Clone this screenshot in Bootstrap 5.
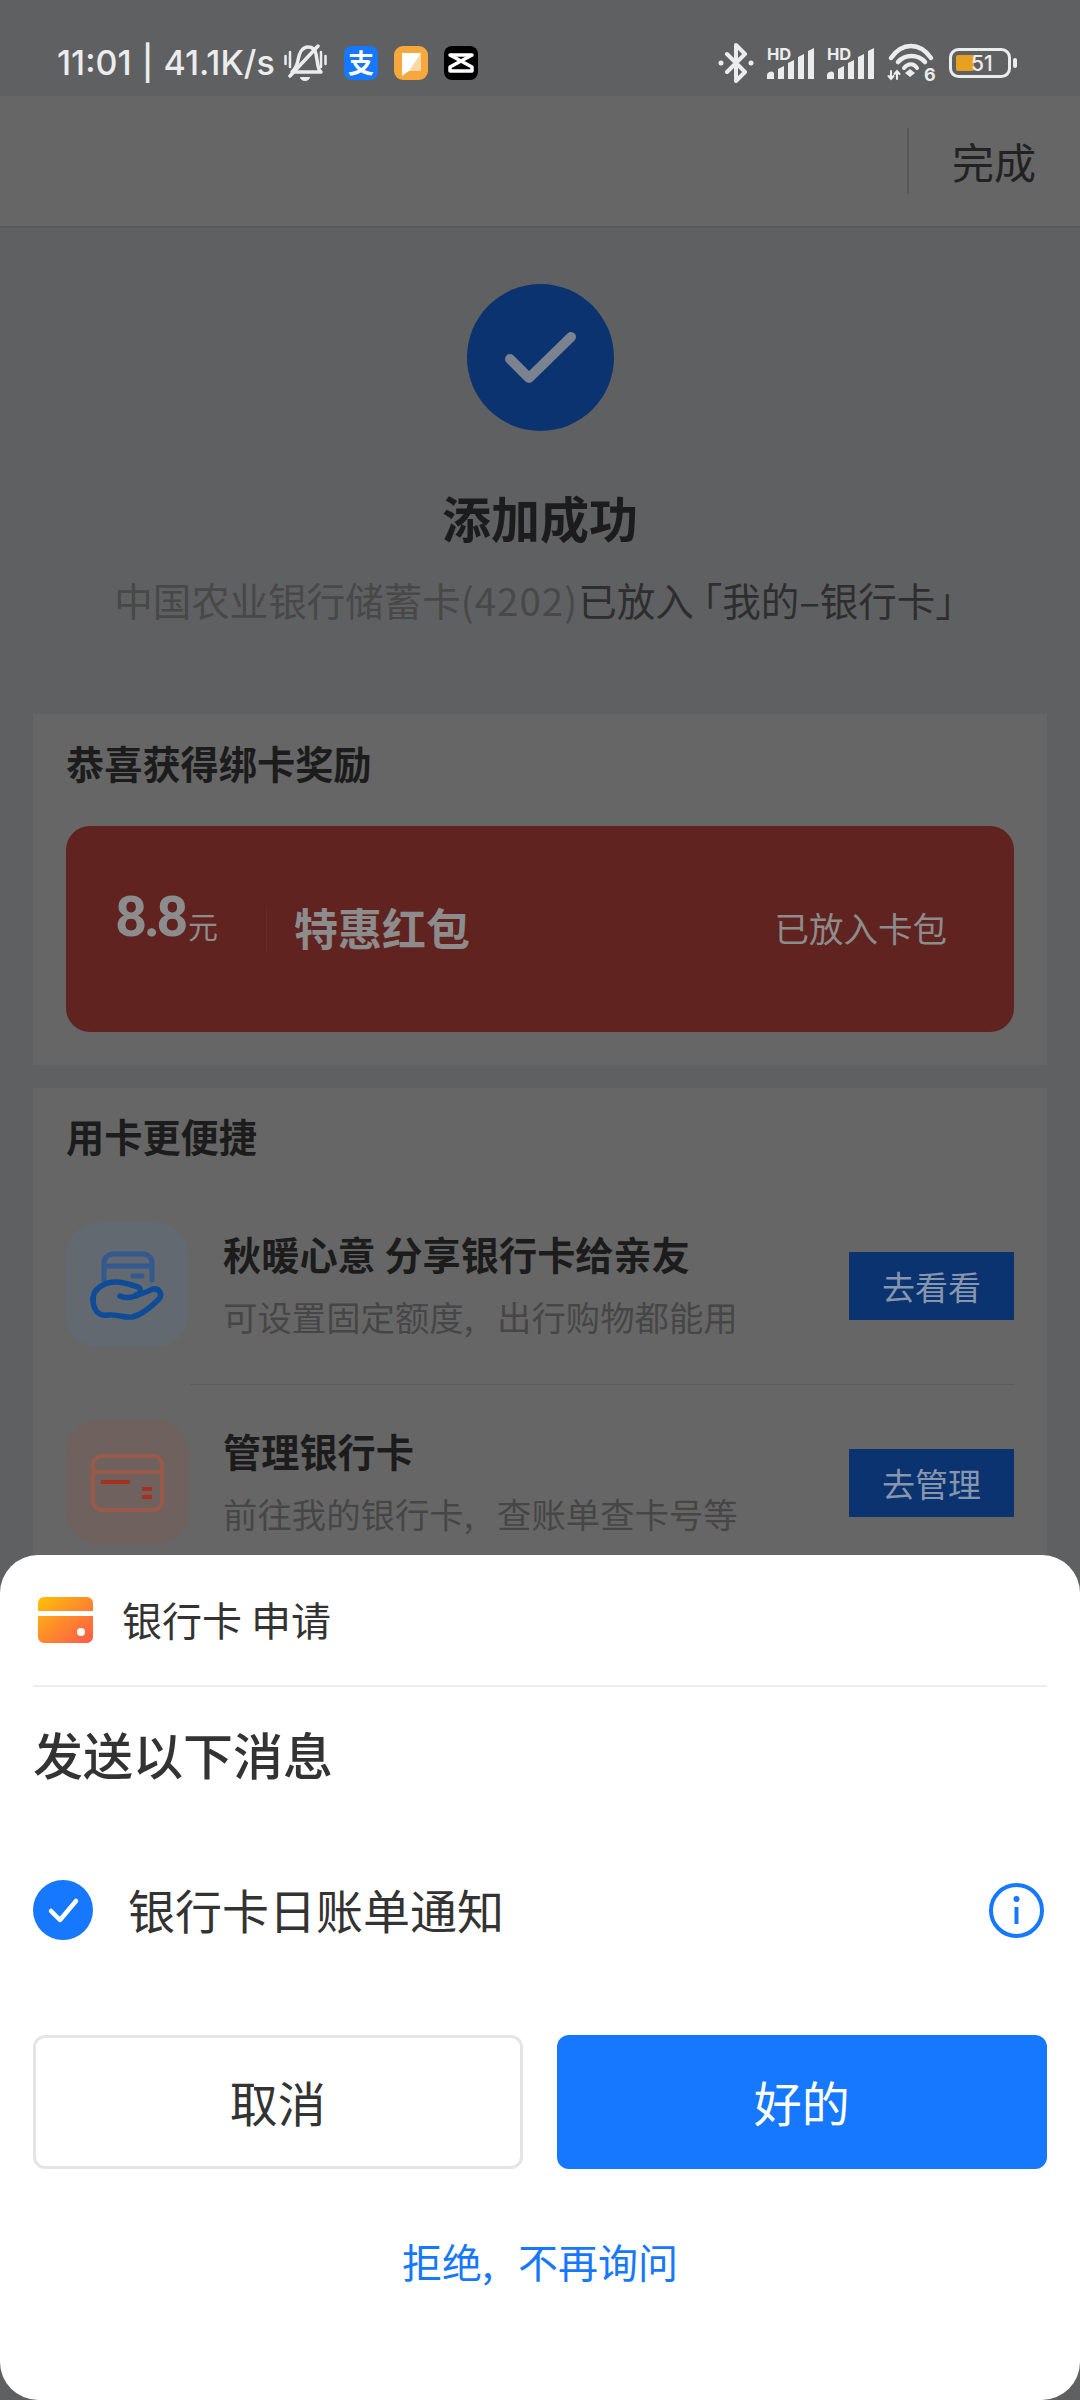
<!DOCTYPE html>
<html lang="zh-CN">
<head>
  <meta charset="utf-8" />
  <title>添加成功</title>
  <meta name="viewport" content="width=device-width, initial-scale=1" />
  <link href="https://cdn.jsdelivr.net/npm/bootstrap@5.3.0/dist/css/bootstrap.min.css" rel="stylesheet" />
  <style>
    html, body { margin: 0; height: 2400px; }
    body { width: 1080px; overflow: hidden; background: #5f6062; color: #1c1c1c; font-family: "Noto Sans CJK SC", "Noto Sans", sans-serif; }
    .phone { width: 1080px; height: 2400px; overflow: hidden; }

    .status-bar { height: 96px; padding: 30px 63px 0 57px; color: #ececec; }
    .status-time { width: 227px; flex-shrink: 0; font-family: Inter, sans-serif; font-size: 34px; font-weight: 500; word-spacing: 1px; line-height: 40px; white-space: nowrap; }
    .app-tile { width: 34px; height: 34px; border-radius: 8px; margin-right: 16px; }
    .tile-pay { background: #1677ff; color: #fff; font-size: 26px; font-weight: 700; line-height: 32px; text-align: center; }

    .top-nav { height: 132px; background: #666; border-bottom: 2px solid #585858; padding-right: 44px; }
    .nav-split { width: 2px; height: 66px; background: #595959; margin-right: 43px; }
    .nav-done { font-size: 42px; line-height: 56px; color: #222; }

    .ok-circle { width: 147px; height: 147px; margin-top: 56px; background: #0a3370; }
    .ok-title { margin: 56px 0 3px; font-size: 49px; font-weight: 700; line-height: 60px; color: #1c1c1c; }
    .ok-sub { margin-top: 24px; padding: 0 0 2px 8px; font-size: 38.5px; line-height: 50px; color: #484848; white-space: nowrap; }
    .ok-sub .sub-dark { color: #2e2e2e; }
    .ok-sub .card-tail { letter-spacing: 1px; }
    .ok-sub .close-up { letter-spacing: -10px; }

    .sec-box { margin: 0 33px; padding: 27px 33px 33px; background: #666; }
    .sec-title { margin: -3px 0 3px; font-size: 38.2px; font-weight: 700; line-height: 50px; color: #1c1c1c; }
    .red-banner { height: 206px; margin-top: 38px; padding: 0 67px 0 49px; border-radius: 24px; background: #612320; color: #8c8c8c; }
    .amount-num { font-family: Roboto, sans-serif; font-size: 56px; font-weight: 700; letter-spacing: -3.500px; line-height: 60px; margin-top: -24px; }
    .amount-unit { font-size: 30px; line-height: 40px; margin-top: -8px; margin-left: 3px; }
    .banner-split { width: 1px; height: 46px; margin: 0 27px 0 48px; background: #682a27; }
    .banner-name { font-size: 44px; font-weight: 700; line-height: 56px; margin-top: -5px; }
    .banner-state { font-size: 34.5px; line-height: 46px; margin-top: -5px; }

    .tool-row { height: 124px; }
    .tool-icon { width: 122px; height: 124px; border-radius: 32px; margin-right: 35px; }
    .tool-blue { background: #626971; }
    .tool-red { background: #6f615e; }
    .tool-main { padding-top: 6px; }
    .tool-name { font-size: 38.2px; font-weight: 700; line-height: 50px; color: #1c1c1c; white-space: nowrap; }
    .tool-desc { margin-top: 12px; font-size: 34.4px; word-spacing: 16px; line-height: 50px; color: #464646; white-space: nowrap; }
    .tool-btn { width: 165px; height: 68px; margin-top: 2px; padding: 0; border: 0; border-radius: 0; background: #0a3370; color: #8796ad; font-size: 33px; line-height: 64px; }
    .tool-btn:hover { background: #0a3370; color: #8796ad; }
    .tool-rule { height: 1px; margin: 37px 0 35px 124px; background: #5c5c5c; }

    .sheet { left: 0; right: 0; bottom: 0; height: 845px; padding: 0 33px; background: #fff; border-radius: 38px; }
    .sheet-head { height: 132px; border-bottom: 2px solid #eee; padding-left: 5px; }
    .sheet-from { margin-left: 29px; margin-top: -3px; font-size: 40px; line-height: 50px; color: #333; white-space: pre; }
    .sheet-title { margin: 36px 0 0; font-size: 50px; font-weight: 500; line-height: 60px; color: #333; }
    .msg-row { height: 60px; margin-top: 97px; }
    .msg-text { margin-left: 35px; margin-top: -3px; font-size: 47px; line-height: 60px; color: #333; }
    .sheet-btns { margin-top: 95px; gap: 34px; }
    .sheet-btn { width: 490px; height: 134px; padding: 0 0 3px; border-radius: 12px; font-size: 48px; line-height: 60px; }
    .btn-cancel { background: #fff; border: 3px solid #e5e5e5; color: #333; }
    .btn-ok { width: 491px; background: #1677ff; border: 0; color: #fff; }
    .never-link { display: block; margin-top: 67px; font-size: 40px; word-spacing: 16px; line-height: 50px; color: #1677ff; text-decoration: none; text-align: center; }
  </style>
</head>
<body>
  <div class="phone position-relative">

    <div class="status-bar d-flex align-items-center">
      <div class="status-time">11:01 | 41.1K/s</div>
      <!-- bell muted -->
      <svg class="flex-shrink-0" style="margin-right:17px" width="43" height="38" viewBox="0 0 43 38" fill="none" stroke="#ececec" stroke-width="3.500" stroke-linecap="round" stroke-linejoin="round">
        <path d="M8 28c3-3 5-6 6-12 1-6 4-13 10-13 4 0 7 2 8 7l2 12c.5 3 2 5 3 6z"/>
        <path d="M16 33h10a5 4 0 0 1-10 0z" fill="#ececec" stroke="none"/>
        <path d="M6 32L34 2"/>
        <path d="M1.500 12v8M6 8v15M37 8v15M41.500 12v8" stroke-width="2.500"/>
      </svg>
      <div class="app-tile tile-pay flex-shrink-0">支</div>
      <svg class="flex-shrink-0" style="margin-right:16px" width="34" height="34" viewBox="0 0 34 34">
        <rect width="34" height="34" rx="9" fill="#f6a83c"/>
        <path d="M8 7h19v18H15l-7 5z" fill="#fff"/>
        <path d="M27 7v18H15z" fill="#fbd7a8"/>
      </svg>
      <svg class="flex-shrink-0" width="34" height="34" viewBox="0 0 34 34" fill="none">
        <rect width="34" height="34" rx="8" fill="#000"/>
        <path d="M6 9l22 12v4H6v-4L28 9" stroke="#fff" stroke-width="3.500" stroke-linejoin="round"/>
        <path d="M6 9h22" stroke="#fff" stroke-width="3.500" stroke-linecap="round"/>
      </svg>

      <div class="ms-auto d-flex align-items-center">
        <!-- bluetooth -->
        <svg width="36" height="40" viewBox="0 0 36 40" fill="none" stroke="#ececec" stroke-width="4" stroke-linejoin="round" stroke-linecap="round">
          <path d="M9 11l18 18-9 9V2l9 9L9 29"/>
          <circle cx="3" cy="20" r="2.500" fill="#ececec" stroke="none"/>
          <circle cx="33" cy="20" r="2.500" fill="#ececec" stroke="none"/>
        </svg>
        <!-- signal 1 -->
        <svg style="margin-left:11px;overflow:visible" width="50" height="32" viewBox="0 0 50 32">
          <text x="2" y="13" font-family="Inter, sans-serif" font-size="16.500" font-weight="700" fill="#ececec">HD</text>
          <path d="M2 32v-3a4 4 0 0 1 7-3v6zM13 32V22l6-3v13zM23 32V16l6-3v19zM33 32V10l6-3v25zM43 32V4l6-3v31z" fill="#ececec"/>
        </svg>
        <!-- signal 2 -->
        <svg style="margin-left:10px;overflow:visible" width="50" height="32" viewBox="0 0 50 32">
          <text x="2" y="13" font-family="Inter, sans-serif" font-size="16.500" font-weight="700" fill="#ececec">HD</text>
          <path d="M2 32v-3a4 4 0 0 1 7-3v6zM13 32V22l6-3v13zM23 32V16l6-3v19zM33 32V10l6-3v25zM43 32V4l6-3v31z" fill="#ececec"/>
        </svg>
        <!-- wifi 6 -->
        <svg style="margin-left:13px;overflow:visible" width="46" height="36" viewBox="0 0 46 36" fill="none" stroke="#ececec" stroke-linecap="round">
          <path d="M3 13C14 -3 32 -3 43 13" stroke-width="4.500"/>
          <path d="M10 17c7-8 20-8 27 0" stroke-width="4.500"/>
          <path d="M16 23c4-5 10-5 13 0" stroke-width="4"/>
          <path d="M22 24l5 4-5 4-5-4z" fill="#ececec" stroke="none"/>
          <path d="M3 26v8M0.500 31l2.500 3 2.500-3M9 34v-8M6.500 29l2.500-3 2.500 3" stroke-width="2"/>
          <text x="36" y="36" font-family="Inter, sans-serif" font-size="18" font-weight="700" fill="#ececec" stroke="none">6</text>
        </svg>
        <!-- battery -->
        <svg style="margin-left:15px" width="68" height="30" viewBox="0 0 68 30">
          <rect x="1.500" y="1.500" width="59" height="27" rx="8" fill="none" stroke="#ececec" stroke-width="3"/>
          <rect x="7" y="7" width="18" height="16" rx="2" fill="#e8a020"/>
          <text x="22" y="23" font-family="Inter, sans-serif" font-size="21" font-weight="500" fill="#ececec">51</text>
          <rect x="64" y="10" width="4" height="10" rx="2" fill="#ececec"/>
        </svg>
      </div>
    </div>

    <div class="top-nav d-flex align-items-center justify-content-end">
      <div class="nav-split"></div>
      <div class="nav-done">完成</div>
    </div>

    <div class="d-flex flex-column align-items-center">
      <div class="ok-circle rounded-circle d-flex align-items-center justify-content-center">
        <svg width="71" height="51" viewBox="0 0 71 51" fill="none" stroke="#7b8290" stroke-width="10" stroke-linecap="round" stroke-linejoin="round">
          <path d="M5 27l19 19L66 5"/>
        </svg>
      </div>
      <h1 class="ok-title">添加成功</h1>
      <div class="ok-sub">中国农业银行储蓄卡<span class="card-tail">(4202)</span><span class="sub-dark">已放<span class="close-up">入</span>「我的–银行卡」</span></div>
    </div>

    <div class="sec-box" style="margin-top:88px">
      <h2 class="sec-title">恭喜获得绑卡奖励</h2>
      <div class="red-banner d-flex align-items-center">
        <div class="amount-num">8.8</div>
        <div class="amount-unit">元</div>
        <div class="banner-split"></div>
        <div class="banner-name">特惠红包</div>
        <div class="banner-state ms-auto">已放入卡包</div>
      </div>
    </div>

    <div class="sec-box" style="margin-top:23px;padding-top:26px">
      <h2 class="sec-title" style="margin-bottom:62px">用卡更便捷</h2>

      <div class="tool-row d-flex align-items-center">
        <div class="tool-icon tool-blue flex-shrink-0">
          <svg width="120" height="124" viewBox="0 0 120 124" fill="none" stroke-linecap="round" stroke-linejoin="round">
            <path d="M38 57V40a9 9 0 0 1 9-9h30a9 9 0 0 1 9 9v17M38 43h48" stroke="#33598f" stroke-width="5"/>
            <path d="M67 53h9" stroke="#33598f" stroke-width="5"/>
            <path d="M27 76C27 66 38 59 50 59 58 59 66 62 72 64 76 66 74 72 70 73 64 75 58 75 54 73" stroke="#0f4c98" stroke-width="5.500"/>
            <path d="M70 72C76 71 82 68 87 66 93 65 97 71 93 76 86 83 76 92 66 94 58 95 50 91 42 92 32 94 27 86 27 76" stroke="#0f4c98" stroke-width="5.500"/>
          </svg>
        </div>
        <div class="tool-main flex-grow-1 align-self-start">
          <div class="tool-name">秋暖心意 分享银行卡给亲友</div>
          <div class="tool-desc">可设置固定额度, 出行购物都能用</div>
        </div>
        <button class="btn tool-btn flex-shrink-0">去看看</button>
      </div>
      <div class="tool-rule"></div>
      <div class="tool-row d-flex align-items-center">
        <div class="tool-icon tool-red flex-shrink-0">
          <svg width="120" height="124" viewBox="0 0 120 124" fill="none">
            <rect x="27" y="36" width="69" height="54" rx="9" stroke="#9a5a4a" stroke-width="4"/>
            <path d="M27 52h69" stroke="#9a5a4a" stroke-width="4"/>
            <path d="M35 62h29" stroke="#a83020" stroke-width="4"/>
            <path d="M76 69h10M76 77h10" stroke="#a83020" stroke-width="4"/>
          </svg>
        </div>
        <div class="tool-main flex-grow-1 align-self-start">
          <div class="tool-name">管理银行卡</div>
          <div class="tool-desc">前往我的银行卡, 查账单查卡号等</div>
        </div>
        <button class="btn tool-btn flex-shrink-0">去管理</button>
      </div>
    </div>

    <div class="sheet position-absolute">
      <div class="sheet-head d-flex align-items-center">
        <svg class="flex-shrink-0" width="55" height="46" viewBox="0 0 55 46">
          <defs>
            <linearGradient id="cardFill" x1="0" y1="0" x2="1" y2="1">
              <stop offset="0" stop-color="#ffc107"/>
              <stop offset="0.5" stop-color="#ff8a2b"/>
              <stop offset="1" stop-color="#ff5a4a"/>
            </linearGradient>
          </defs>
          <path d="M0 14V6a6 6 0 0 1 6-6h43a6 6 0 0 1 6 6v8zM0 19h55v21a6 6 0 0 1-6 6H6a6 6 0 0 1-6-6z" fill="url(#cardFill)"/>
          <circle cx="43" cy="35" r="4" fill="#fff"/>
        </svg>
        <div class="sheet-from">银行卡 申请</div>
      </div>
      <h2 class="sheet-title">发送以下消息</h2>
      <div class="msg-row d-flex align-items-center">
        <svg class="flex-shrink-0" width="60" height="60" viewBox="0 0 60 60" fill="none">
          <circle cx="30" cy="30" r="30" fill="#1677ff"/>
          <path d="M18 31l9 9 16-19" stroke="#fff" stroke-width="4.500" stroke-linecap="round" stroke-linejoin="round"/>
        </svg>
        <div class="msg-text">银行卡日账单通知</div>
        <svg class="ms-auto flex-shrink-0" style="margin-right:3px" width="55" height="55" viewBox="0 0 55 55" fill="none">
          <circle cx="27.500" cy="27.500" r="25.500" stroke="#1677ff" stroke-width="4"/>
          <circle cx="27.500" cy="16" r="3" fill="#1677ff"/>
          <path d="M27.500 24v17" stroke="#1677ff" stroke-width="4"/>
        </svg>
      </div>
      <div class="sheet-btns d-flex">
        <button class="btn sheet-btn btn-cancel">取消</button>
        <button class="btn sheet-btn btn-ok">好的</button>
      </div>
      <a class="never-link" href="#">拒绝, 不再询问</a>
    </div>
  </div>

  <script src="https://cdn.jsdelivr.net/npm/bootstrap@5.3.0/dist/js/bootstrap.bundle.min.js"></script>
</body>
</html>
